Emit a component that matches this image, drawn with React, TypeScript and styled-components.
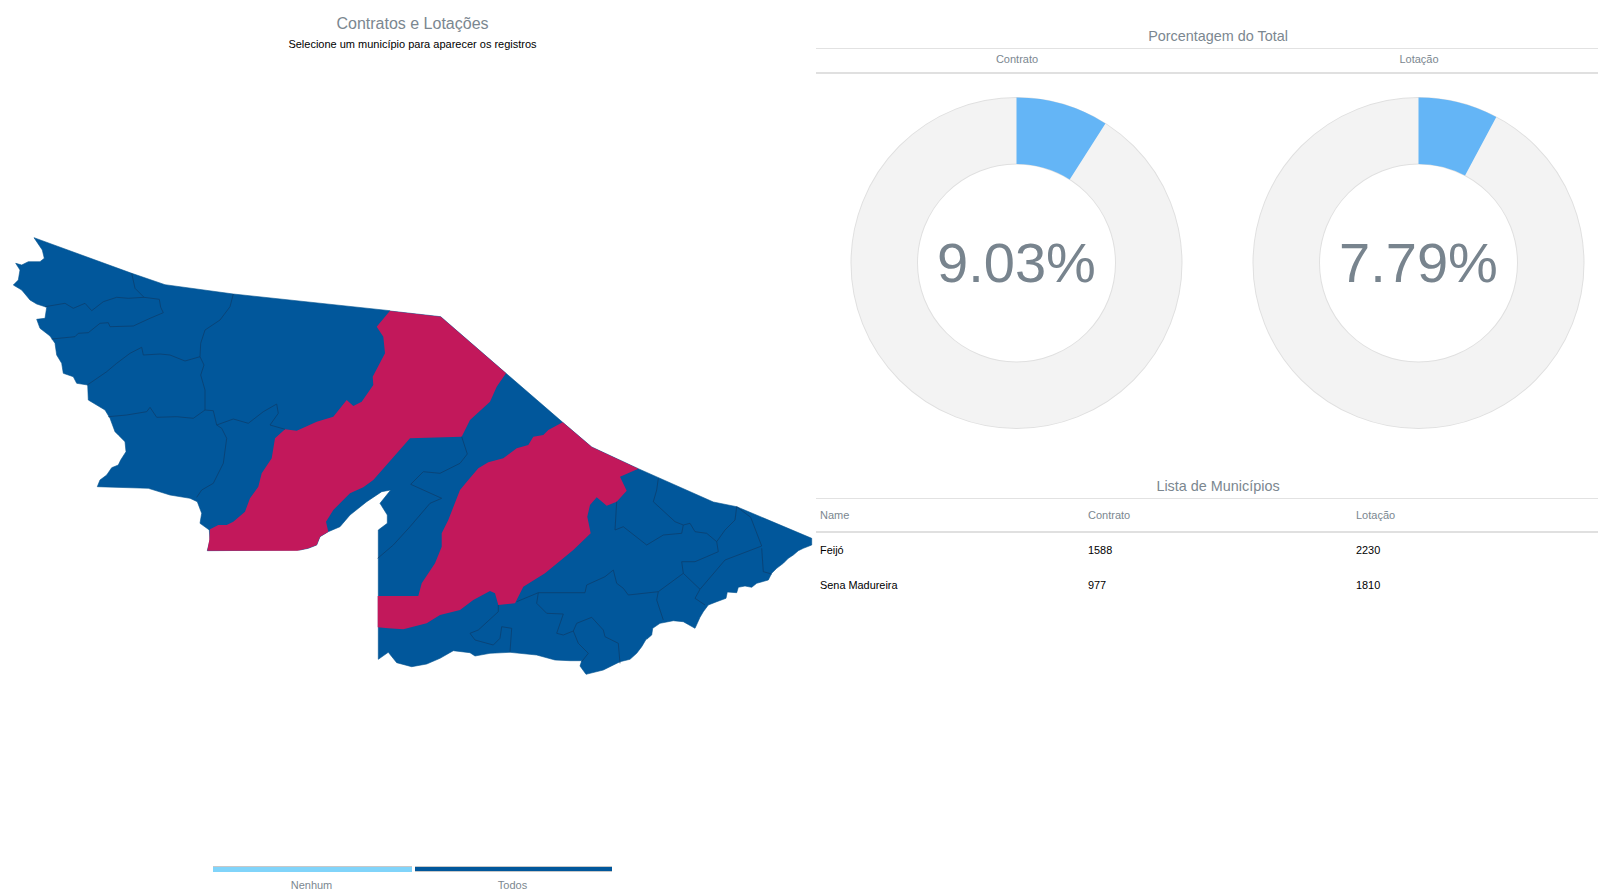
import React from 'react';
import styled, { createGlobalStyle } from 'styled-components';

const GlobalStyle = createGlobalStyle`
	html, body {
		margin: 0;
		padding: 0;
		background: #fff;
		overflow: hidden;
	}
	body {
		font-family: "Liberation Sans", Arial, sans-serif;
	}
`;

type Pt = [number, number];
type Seg = { at: Pt; d: string };

// traced against crops of the map: "at" is the crop origin, d is in crop px at 3x
const WEST: Pt = [0, 220];
const EAST: Pt = [360, 300];

const toPage = ({ at, d }: Seg) => {
	const nums = d.trim().split(/[\s,]+/).map(Number);
	const pts: Pt[] = [];
	for (let i = 0; i < nums.length; i += 2) {
		pts.push([at[0] + nums[i] / 3, at[1] + nums[i + 1] / 3]);
	}
	return pts;
};

const toPath = (segs: Seg[], close = false) =>
	segs
		.flatMap(toPage)
		.map((p, i) => `${i ? 'L' : 'M'}${p[0].toFixed(1)} ${p[1].toFixed(1)}`)
		.join('') + (close ? 'Z' : '');

const OUTLINE: Seg[] = [
	{ at: WEST, d: '102,53 395,160 495,194 700,222 1170,272' },
	{ at: EAST, d: '90,33 242,50 438,220 608,367 695,441 835,506 1060,606 1130,620 1355,715' },
	{
		at: [640, 530],
		d: `515,45 490,55 475,62 460,75 445,85 430,100 410,115 395,130 385,150 350,160 335,172 315,168 295,172 290,188 262,186
		258,205 230,215 205,225 190,245 180,262 165,295 130,275 100,272 60,280 38,295 35,315 20,328`,
	},
	{
		at: [370, 620],
		d: `830,55 815,80 800,100 780,118 750,125 700,150 648,163 630,138 635,122 600,122 555,120 500,105 420,97 360,100
		315,108 300,98 250,92 210,115 170,132 125,140 80,128 55,97 25,118`,
	},
	{
		at: [300, 480],
		d: `235,150 262,130 262,105 240,70 272,30 245,35 200,65 150,105 120,140 85,155 60,170 50,195 25,205 0,210`,
	},
	{ at: WEST, d: '622,992 630,960 628,930 600,910 605,880 592,845 570,835' },
	{
		at: [90, 400],
		d: `240,285 175,265 22,260 30,240 50,225 65,203 85,195 92,180 108,155 105,125 85,105 75,95 60,55 45,30`,
	},
	{
		at: [5, 230],
		d: `250,510 248,465 215,460 205,440 175,430 170,400 155,375 150,340 135,318 105,295 95,268 120,265 125,232 95,222 75,210
		50,180 25,165 40,150 45,120 32,100 50,105 70,95 105,95 118,85 112,60`,
	},
];

const RED_WEST: Seg[] = [
	{
		at: WEST,
		d: `1170,272 1130,320 1150,350 1155,400 1118,470 1120,495 1085,545 1060,558 1040,540 1000,590 950,605 890,632 855,628
		825,655 815,715 785,760 775,800 750,835 735,875 700,905 680,915 655,915 630,928 628,960 622,992 892,992`,
	},
	{ at: [300, 480], d: '25,205 50,195 60,170 85,155 78,125 100,90 150,40 190,22 220,0' },
	{ at: EAST, d: '150,415 305,410 330,360 390,305 410,260 438,220 242,50 90,33' },
];

const RED_EAST: Seg[] = [
	{
		at: EAST,
		d: `608,367 695,441 835,506 780,530 800,572 770,605 740,617 710,592 690,615 682,650 692,700 640,750 555,820 490,860
		465,910 415,915 405,880 390,873 340,900 300,930 240,945 200,970 130,988 85,985 53,982 53,888 175,888 185,850 225,790
		245,740 245,700 265,660 300,570 325,540 355,505 385,487 430,475 470,445 505,435 520,410 550,405 565,390`,
	},
];

const BORDERS: Seg[] = [
	{ at: WEST, d: '395,160 405,205 432,232 385,235 350,232 310,245 275,272 255,250 220,265 195,250 135,260' },
	{ at: WEST, d: '432,232 478,238 482,262 490,278 450,295 400,318 330,320 325,308 300,310 265,338 235,340 225,350 155,357' },
	{ at: WEST, d: '700,222 690,260 660,300 615,330 602,370 600,410 555,423 510,405 480,402 430,405 425,382 390,400 350,430 320,455 262,495' },
	{ at: WEST, d: '600,410 612,435 602,465 615,510 615,570 580,595 530,590 470,592 450,562 440,575 380,585 325,590' },
	{ at: WEST, d: '615,570 640,572 650,615 665,625 680,655 670,730 640,790 605,810 590,832' },
	{ at: WEST, d: '650,615 700,597 745,610 790,575 830,552 835,580 810,615 855,628' },
	{ at: EAST, d: '305,410 322,462 300,490 240,520 190,515 152,553 245,595 210,610 150,680 100,735 53,775' },
	{ at: EAST, d: '770,605 765,690 790,680 860,735 910,705 965,700 970,675 990,670 1005,695 1040,700 1070,725 1075,755 1040,770 1005,785 965,785 970,820 1020,868 1095,780 1205,738 1172,652 1130,620' },
	{ at: EAST, d: '1070,725 1095,690 1125,660 1130,620' },
	{ at: EAST, d: '895,535 890,570 880,605 945,665 970,675' },
	{ at: EAST, d: '1205,745 1210,815 1235,822' },
	{ at: EAST, d: '970,820 895,875 805,885 790,865 770,850 760,810 735,830 680,855 675,878 535,878 470,905' },
	{ at: EAST, d: '535,878 530,910 560,940 610,942 590,1000 610,1005 640,993 650,970 695,952 730,990 735,1010 775,1030 780,1090' },
	{ at: EAST, d: '640,993 655,1030 685,1060 665,1085' },
	{ at: EAST, d: '895,875 890,900 910,960' },
	{ at: EAST, d: '1020,868 1005,895 1035,915' },
	{ at: EAST, d: '415,915 415,935 355,990 330,1000 345,1020 400,1035 420,1015 425,980 455,985 450,1055' },
];

const MUNICIPIOS = [
	{ name: 'Feijó', contrato: 1588, lotacao: 2230 },
	{ name: 'Sena Madureira', contrato: 977, lotacao: 1810 },
];

const Donut = ({ pct }: { pct: number }) => {
	const cx = 200.5;
	const cy = 189;
	const R = 165.5;
	const r = 99;
	const a = (pct / 100) * 2 * Math.PI;
	const sin = Math.sin(a);
	const cos = Math.cos(a);
	const wedge = `M${cx} ${cy - R}A${R} ${R} 0 0 1 ${cx + R * sin} ${cy - R * cos}L${cx + r * sin} ${cy - r * cos}A${r} ${r} 0 0 0 ${cx} ${cy - r}Z`;
	return (
		<DonutSvg viewBox="0 0 402 403">
			<circle cx={cx} cy={cy} r={(R + r) / 2} fill="none" stroke="#e0e0e0" strokeWidth={R - r + 1} />
			<circle cx={cx} cy={cy} r={(R + r) / 2} fill="none" stroke="#f3f3f3" strokeWidth={R - r - 1} />
			<path d={wedge} fill="#64b5f6" />
			<DonutLabel x={cx} y={cy + 19} textAnchor="middle">
				{pct.toFixed(2)}%
			</DonutLabel>
		</DonutSvg>
	);
};

const App = () => (
	<Page>
		<GlobalStyle />
		<MapPanel>
			<MapHeader>
				<MapTitle>Contratos e Lotações</MapTitle>
				<MapHint>Selecione um município para aparecer os registros</MapHint>
			</MapHeader>
			<MapSvg viewBox="0 56 816 760">
				<path d={toPath(OUTLINE, true)} fill="#01579b" stroke="#01528f" strokeWidth="0.6" />
				<path d={toPath(RED_WEST, true)} fill="#c2185b" />
				<path d={toPath(RED_EAST, true)} fill="#c2185b" />
				{BORDERS.map((seg, i) => (
					<path key={i} d={toPath([seg])} fill="none" stroke="#0b3f6e" strokeWidth="0.8" />
				))}
			</MapSvg>
			<Legend>
				<LegendItem>
					<LegendBar $color="#81d4fa" />
					<LegendLabel>Nenhum</LegendLabel>
				</LegendItem>
				<LegendItem>
					<LegendBar $color="#01579b" />
					<LegendLabel>Todos</LegendLabel>
				</LegendItem>
			</Legend>
		</MapPanel>
		<StatsPanel>
			<SectionTitle>Porcentagem do Total</SectionTitle>
			<DonutHeader>
				<DonutHeading>Contrato</DonutHeading>
				<DonutHeading>Lotação</DonutHeading>
			</DonutHeader>
			<DonutRow>
				<Donut pct={9.03} />
				<Donut pct={7.79} />
			</DonutRow>
			<ListTitle>Lista de Municípios</ListTitle>
			<Table>
				<thead>
					<tr>
						<Th>Name</Th>
						<Th>Contrato</Th>
						<Th>Lotação</Th>
					</tr>
				</thead>
				<tbody>
					{MUNICIPIOS.map(m => (
						<tr key={m.name}>
							<Td>{m.name}</Td>
							<Td>{m.contrato}</Td>
							<Td>{m.lotacao}</Td>
						</tr>
					))}
				</tbody>
			</Table>
		</StatsPanel>
	</Page>
);

const Page = styled.div`
	display: flex;
	width: 1598px;
	height: 889px;
	overflow: hidden;
	background: #fff;
`;

const MapPanel = styled.section`
	flex: 0 0 816px;
	display: flex;
	flex-direction: column;
	height: 889px;
`;

const MapHeader = styled.header`
	height: 56px;
	padding: 14px 0 0 9px;
	box-sizing: border-box;
	text-align: center;
`;

const MapTitle = styled.div`
	font-size: 16px;
	line-height: 19px;
	color: #7b8790;
`;

const MapHint = styled.div`
	font-size: 11px;
	line-height: 13px;
	margin-top: 5px;
	color: #000;
`;

const MapSvg = styled.svg`
	display: block;
	flex: none;
	width: 816px;
	height: 760px;
`;

const Legend = styled.div`
	display: grid;
	grid-template-columns: 199px 197px;
	justify-content: start;
	gap: 3px;
	padding-left: 213px;
	margin-top: auto;
	height: 23px;
`;

const LegendItem = styled.div`
	text-align: center;
`;

const LegendBar = styled.div<{ $color: string }>`
	height: 4px;
	background: ${p => p.$color};
	border-top: 1px solid #c8c8c8;
	border-bottom: 1px solid ${p => (p.$color === '#01579b' ? '#c8c8c8' : p.$color)};
`;

const LegendLabel = styled.div`
	font-size: 11px;
	line-height: 7px;
	margin-top: 10px;
	padding-right: 2px;
	color: #7b8790;
`;

const StatsPanel = styled.section`
	flex: 0 0 804px;
	padding-top: 28px;
	box-sizing: border-box;
`;

const SectionTitle = styled.div`
	height: 20px;
	font-size: 14.4px;
	line-height: 16px;
	text-align: center;
	color: #7b8790;
	border-bottom: 1px solid #e2e2e2;
`;

const DonutHeader = styled.div`
	display: grid;
	grid-template-columns: 1fr 1fr;
	height: 23px;
	border-bottom: 2px solid #e0e0e0;
`;

const DonutHeading = styled.div`
	font-size: 11px;
	line-height: 21px;
	text-align: center;
	color: #7b8790;
`;

const DonutRow = styled.div`
	display: grid;
	grid-template-columns: 1fr 1fr;
	height: 403px;
`;

const DonutSvg = styled.svg`
	display: block;
	width: 402px;
	height: 403px;
`;

const DonutLabel = styled.text`
	font-size: 56px;
	fill: #78848e;
	font-family: "Liberation Sans", Arial, sans-serif;
`;

const ListTitle = styled(SectionTitle)`
	padding-top: 1px;
`;

const Table = styled.table`
	width: 804px;
	table-layout: fixed;
	border-collapse: collapse;
	font-size: 11px;
`;

const Th = styled.th`
	height: 33px;
	padding: 0 4px;
	box-sizing: border-box;
	text-align: left;
	font-weight: normal;
	color: #7b8790;
	border-bottom: 2px solid #e0e0e0;
`;

const Td = styled.td`
	height: 35px;
	padding: 0 4px;
	box-sizing: border-box;
	font-size: 10.9px;
	color: #000;
`;

export default App;
